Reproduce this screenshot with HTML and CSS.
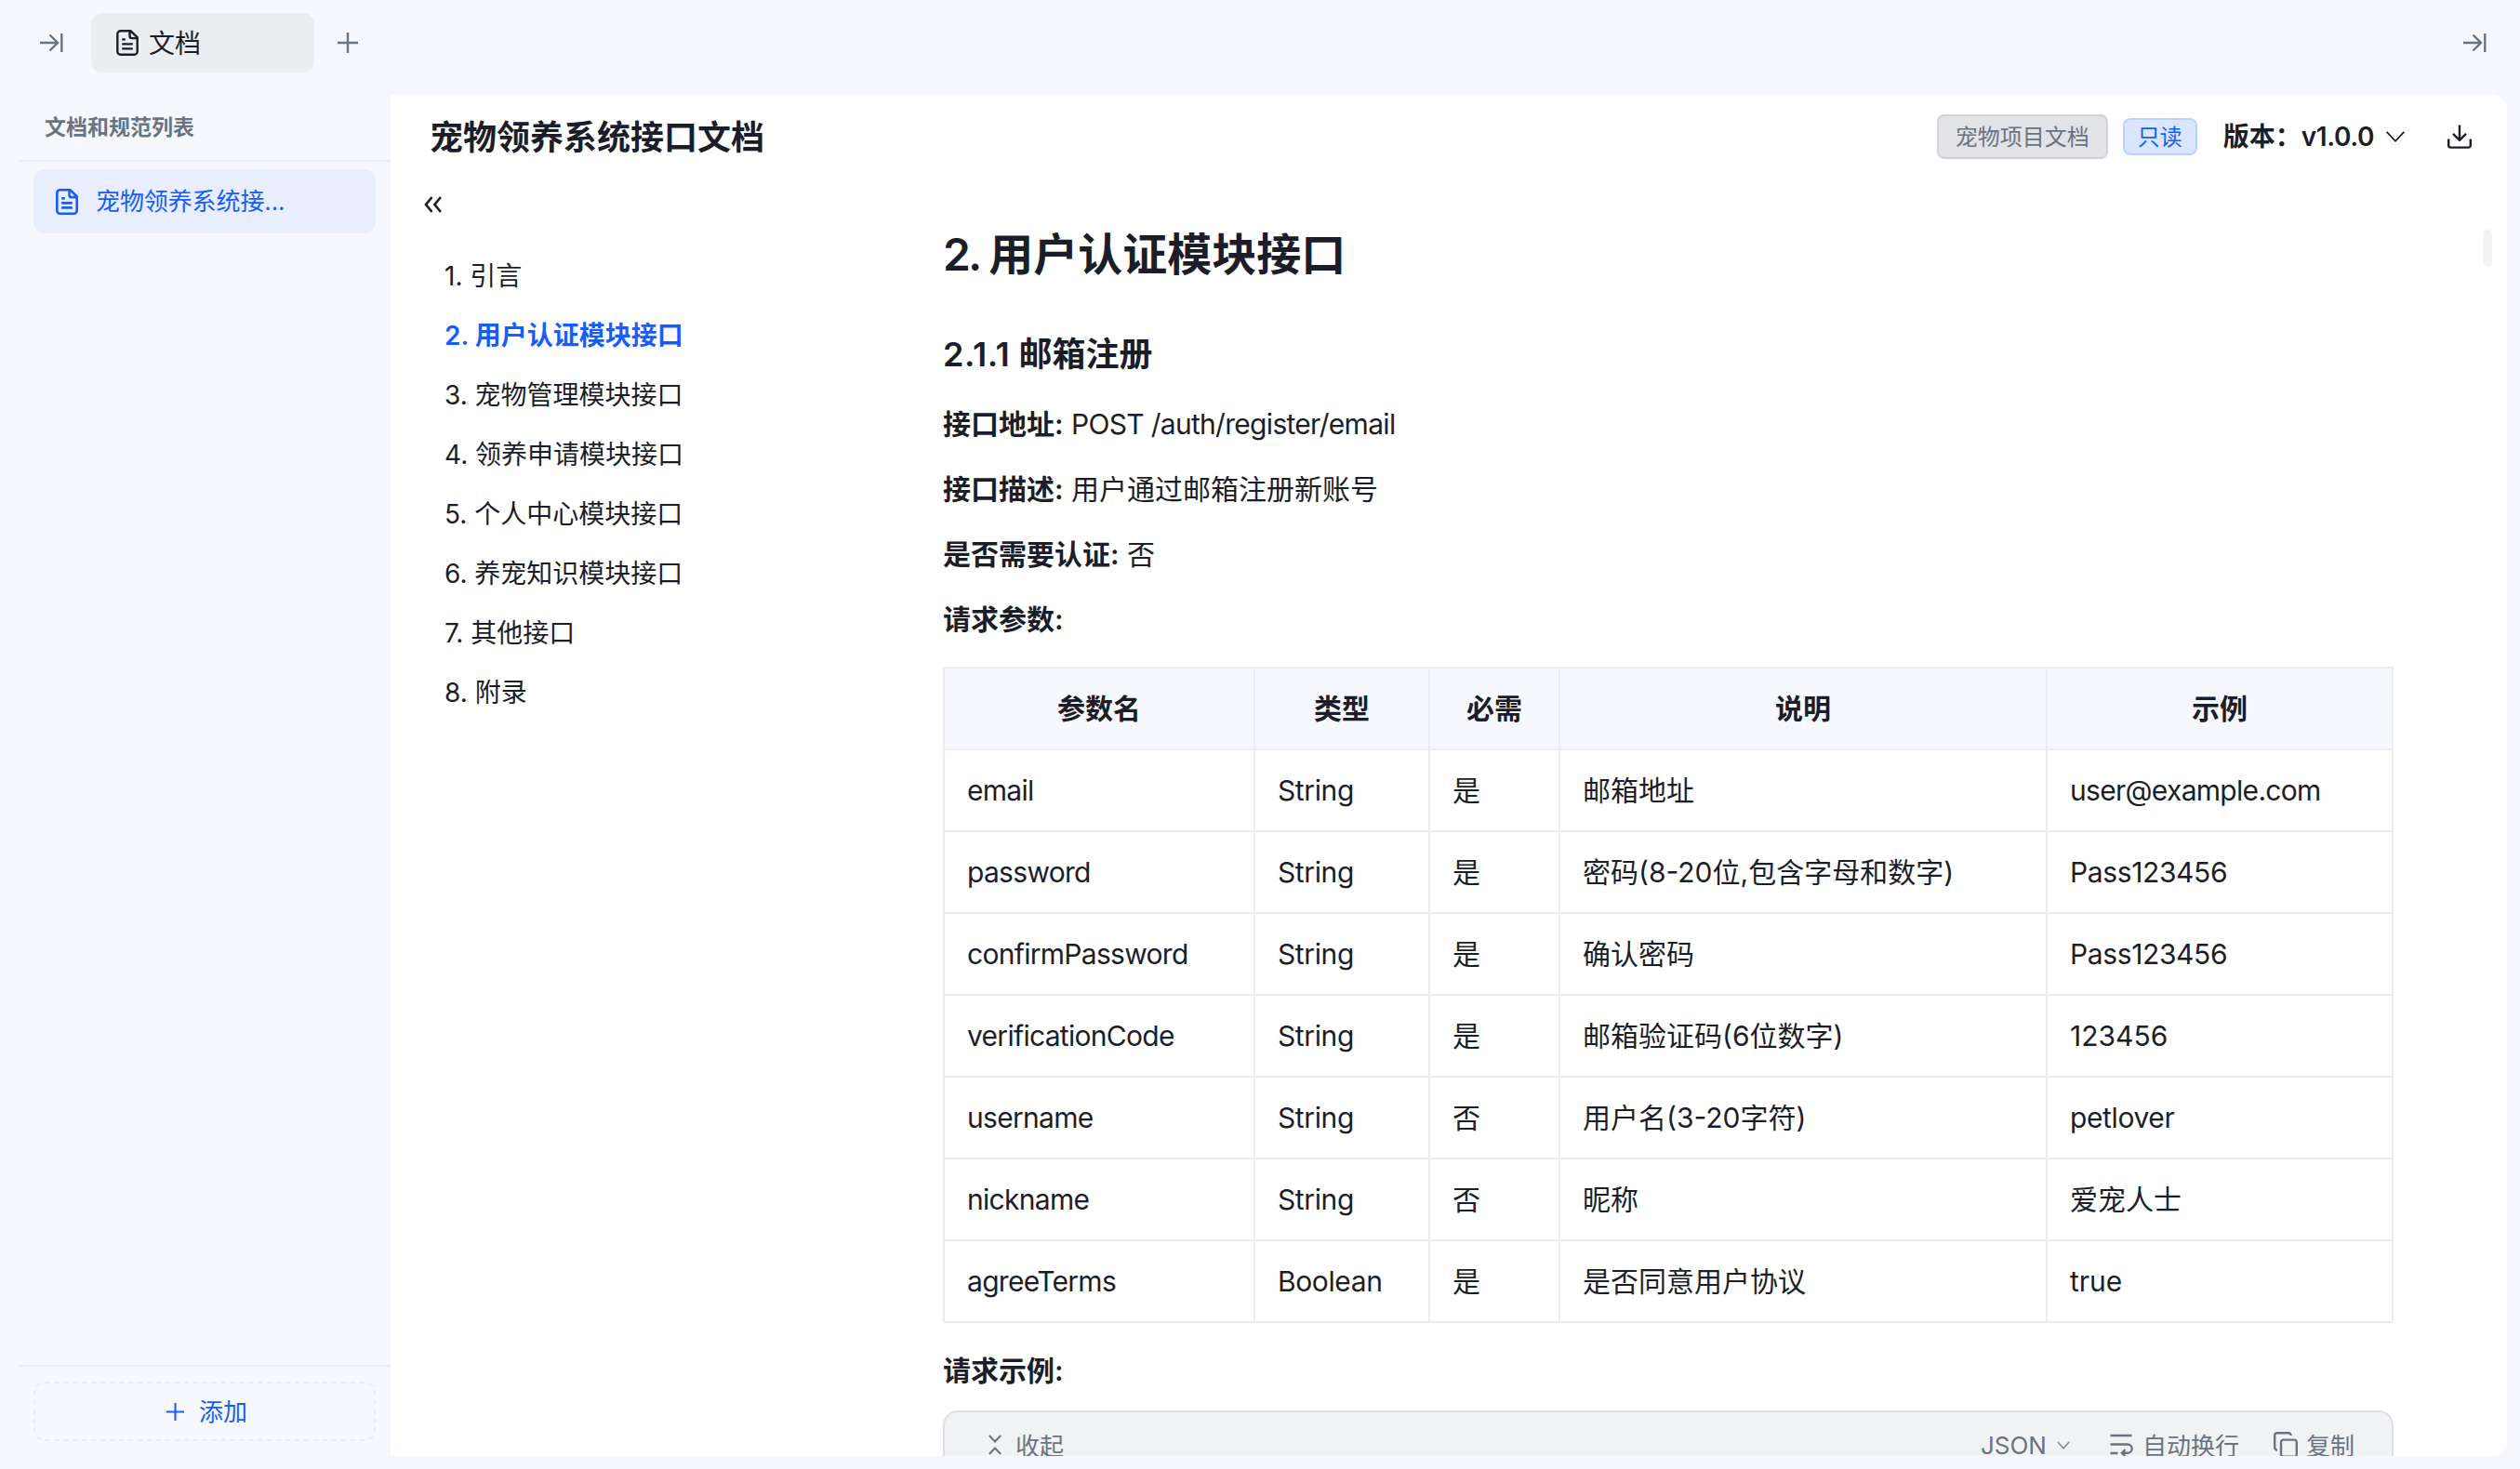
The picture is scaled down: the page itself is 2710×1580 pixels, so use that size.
FILE: index.html
```html
<!DOCTYPE html>
<html lang="zh-CN">
<head>
<meta charset="utf-8">
<title>宠物领养系统接口文档</title>
<link rel="stylesheet" href="styles.css">
</head>
<body>
<svg class="sprite" width="0" height="0" aria-hidden="true">
  <symbol id="doc" viewBox="0 0 24 28"><path d="M15.5 1.3H4.6A3.3 3.3 0 0 0 1.3 4.6v18.8a3.3 3.3 0 0 0 3.3 3.3h14.800a3.3 3.3 0 0 0 3.3-3.3V8.2zM14.5 1.6v5.2a2.3 2.3 0 0 0 2.3 2.3h5.7M6.2 10.4h3.6M6.2 15.4h11.6M6.2 20.4h11.6"/></symbol>
  <symbol id="to-right" viewBox="0 0 26 22"><path d="M1 11h18.5M11.5 2.5l8.5 8.5-8.5 8.5M24.3 1v20"/></symbol>
  <symbol id="plus" viewBox="0 0 22 22"><path d="M11 0v22M0 11h22"/></symbol>
</svg>
<div class="app">
  <header class="topbar">
    <svg class="icon arrow"><use href="#to-right"/></svg>
    <div class="tab"><svg class="icon doc"><use href="#doc"/></svg><span>文档</span></div>
    <svg class="icon plus"><use href="#plus"/></svg>
    <svg class="icon arrow end"><use href="#to-right"/></svg>
  </header>
  <div class="body">
    <aside class="sidebar">
      <h2 class="side-title">文档和规范列表</h2>
      <nav class="side-list">
        <a class="side-item"><svg class="icon doc"><use href="#doc"/></svg><span>宠物领养系统接...</span></a>
      </nav>
      <div class="side-foot">
        <button class="add"><svg class="icon"><use href="#plus"/></svg><span>添加</span></button>
      </div>
    </aside>
    <main class="panel">
      <div class="panel-head">
        <h1>宠物领养系统接口文档</h1>
        <span class="tag">宠物项目文档</span>
        <span class="tag readonly">只读</span>
        <span class="version">版本：<span>v1.0.0</span></span>
        <svg class="icon chevron" viewBox="0 0 20 12"><path d="M.7.8L10 10.8 19.3.8"/></svg>
        <svg class="icon download" viewBox="0 0 26 26"><path d="M13 .5v15.5M6 9.8l7 7 7-7M1.2 15.6v6.6a2.4 2.4 0 0 0 2.4 2.4h18.8a2.4 2.4 0 0 0 2.4-2.4v-6.6"/></svg>
      </div>
      <div class="panel-body">
        <nav class="toc">
          <svg class="icon fold" viewBox="0 0 20 18"><path d="M8.6 1L2 9l6.6 8M18 1l-6.600 8L18 17"/></svg>
          <ol>
            <li>1. 引言</li>
            <li class="active">2. 用户认证模块接口</li>
            <li>3. 宠物管理模块接口</li>
            <li>4. 领养申请模块接口</li>
            <li>5. 个人中心模块接口</li>
            <li>6. 养宠知识模块接口</li>
            <li>7. 其他接口</li>
            <li>8. 附录</li>
          </ol>
        </nav>
        <article class="article">
          <h2><span>2.</span> 用户认证模块接口</h2>
          <h3><span class="num">2.1.1</span> 邮箱注册</h3>
          <p><strong>接口地址:</strong> <span class="tight">POST /auth/register/email</span></p>
          <p><strong>接口描述:</strong> 用户通过邮箱注册新账号</p>
          <p><strong>是否需要认证:</strong> 否</p>
          <p><strong>请求参数:</strong></p>
          <table>
            <colgroup><col class="c-name"><col class="c-type"><col class="c-req"><col class="c-desc"><col></colgroup>
            <thead><tr><th>参数名</th><th>类型</th><th>必需</th><th>说明</th><th>示例</th></tr></thead>
            <tbody>
              <tr><td class="tight">email</td><td class="snug">String</td><td>是</td><td>邮箱地址</td><td class="tight">user@example.com</td></tr>
              <tr><td class="tight">password</td><td class="snug">String</td><td>是</td><td>密码(8-20位,包含字母和数字)</td><td class="snug">Pass123456</td></tr>
              <tr><td class="tight">confirmPassword</td><td class="snug">String</td><td>是</td><td>确认密码</td><td class="snug">Pass123456</td></tr>
              <tr><td class="tight">verificationCode</td><td class="snug">String</td><td>是</td><td>邮箱验证码(6位数字)</td><td>123456</td></tr>
              <tr><td class="tight">username</td><td class="snug">String</td><td>否</td><td>用户名(3-20字符)</td><td class="snug">petlover</td></tr>
              <tr><td class="tight">nickname</td><td class="snug">String</td><td>否</td><td>昵称</td><td>爱宠人士</td></tr>
              <tr><td class="tight">agreeTerms</td><td class="snug">Boolean</td><td>是</td><td>是否同意用户协议</td><td>true</td></tr>
            </tbody>
          </table>
          <p class="caption"><strong>请求示例:</strong></p>
          <div class="code">
            <svg class="icon collapse" viewBox="0 0 14 22"><path d="M.8 1L7 7.500 13.200 1M.8 21L7 14.500l6.200 6.500"/></svg>
            <span class="label">收起</span>
            <span class="lang">JSON</span>
            <svg class="icon caret" viewBox="0 0 14 9"><path d="M.7.7L7 7.800 13.300.7"/></svg>
            <svg class="icon wrap" viewBox="0 0 24 26"><path d="M.5 3h23M.5 12.500H19a4.600 4.600 0 0 1 0 9.300h-5M16.500 18l-3.500 3.800 3.500 3.800M.5 22h8"/></svg>
            <span class="wrap-label">自动换行</span>
            <svg class="icon copy" viewBox="0 0 26 28"><path d="M4 19.500A2.600 2.600 0 0 1 1.200 17V3.800A2.600 2.600 0 0 1 3.800 1.200H16A2.600 2.600 0 0 1 18.600 4M10.400 8.600h12a2.400 2.400 0 0 1 2.400 2.400v13.400a2.400 2.400 0 0 1-2.400 2.400h-12A2.400 2.400 0 0 1 8 24.400V11a2.400 2.400 0 0 1 2.400-2.400z"/></svg>
            <span>复制</span>
          </div>
        </article>
        <div class="scroll-thumb"></div>
      </div>
    </main>
  </div>
</div>
</body>
</html>
```

FILE: styles.css
```css
* { box-sizing: border-box; margin: 0; padding: 0; }
body {
  width: 2710px; height: 1580px; overflow: hidden;
  background: #f7f8fd; color: #1b1e28;
  font-family: Inter, "Noto Sans CJK SC", sans-serif;
  font-size: 30px;
}
.sprite { display: none; }
.icon { display: block; flex: none; fill: none; stroke: currentColor; stroke-width: 2.4; overflow: visible; }
.app { display: flex; flex-direction: column; width: 2710px; height: 1580px; padding: 0 14px 14px 20px; }

.topbar { display: flex; align-items: center; height: 102px; padding: 0 22px 10px; color: #6b7280; }
.topbar .arrow { width: 26px; height: 22px; }
.tab {
  display: flex; align-items: center; gap: 11px;
  width: 240px; height: 64px; margin: 0 25px 0 30px; padding-left: 27px;
  border-radius: 12px; background: #ecedf1; color: #1b1e28; font-size: 28px;
}
.tab span, .side-item span, .add span { padding-bottom: 3px; }
.doc { width: 24px; height: 28px; }
.topbar .plus { width: 22px; height: 22px; }
.topbar .end { margin-left: auto; }

.body { display: flex; flex: 1; min-height: 0; }
.sidebar { display: flex; flex-direction: column; width: 400px; }
.side-title {
  height: 72px; padding: 0 0 0 28px; border-bottom: 2px solid #ecedf1;
  font-size: 23px; font-weight: 600; line-height: 70px; color: #6b7280;
}
.side-list { flex: 1; padding: 8px 16px; }
.side-item {
  display: flex; align-items: center; gap: 19px; height: 69px; padding-left: 24px;
  border-radius: 12px; background: #e8eefd; color: #165dff; font-size: 26px;
}
.side-item span { padding-bottom: 4px; letter-spacing: -.1px; }
.side-item .doc { stroke-width: 2.600; }
.side-foot { padding: 16px; border-top: 2px solid #ecedf1; }
.add {
  display: flex; align-items: center; justify-content: center; gap: 16px;
  width: 368px; height: 64px; padding-left: 5px; border: 2px dashed #ecedf1; border-radius: 12px;
  background: none; color: #165dff; font: inherit; font-size: 26px;
}
.add .icon { width: 19px; height: 19px; }

.panel { display: flex; flex-direction: column; flex: 1; overflow: hidden; background: #fff; border-radius: 0 16px 16px 0; }
.panel-head { display: flex; align-items: center; height: 90px; padding: 0 38px 0 42px; }
.panel-head h1 { flex: 1; padding-top: 2px; font-size: 36px; font-weight: 600; line-height: 48px; }
.tag {
  display: flex; align-items: center; justify-content: center; width: 184px; height: 48px; padding-bottom: 3px;
  border: 2px solid #d1d3d8; border-radius: 8px; background: #e1e3e7; color: #6b7280; font-size: 24px;
}
.readonly { width: 80px; height: 40px; margin-left: 16px; border-color: #b9d3ff; background: #dae6ff; color: #165dff; }
.version { margin-left: 28px; font-size: 28px; font-weight: 600; line-height: 40px; }
.version span { letter-spacing: -.4px; }
.chevron { width: 20px; height: 12px; margin-left: 13px; stroke-width: 1.800; }
.download { width: 26px; height: 26px; margin-left: 46px; }

.panel-body { display: flex; flex: 1; min-height: 0; }
.toc { width: 594px; padding: 19px 0 0 36px; }
.fold { width: 20px; height: 18px; stroke-width: 2.600; }
.toc ol { list-style: none; padding: 36px 0 0 22px; font-size: 28px; line-height: 64px; }
.toc .active { color: #165dff; font-weight: 600; }

.article { width: 1560px; padding-top: 47px; }
.article h2 { font-size: 48px; font-weight: 600; line-height: 70px; word-spacing: -2px; }
.article h2 span { letter-spacing: -3px; }
.article h3 { margin: 46px 0 25px; font-size: 36px; font-weight: 600; line-height: 52px; }
.num { letter-spacing: .6px; }
.article p { height: 48px; margin-bottom: 22px; line-height: 48px; }
.article strong { font-weight: 600; }
.article .caption { margin-bottom: 19px; }
.article table { width: 1560px; margin: 27px 0; border-collapse: collapse; table-layout: fixed; }
.c-name { width: 334px; }
.c-type { width: 188px; }
.c-req { width: 140px; }
.c-desc { width: 524px; }
th, td { height: 88px; padding: 0 24px; border: 2px solid #ecedf1; text-align: left; line-height: 48px; }
th { background: #f7f8fd; font-weight: 600; text-align: center; }
.tight { letter-spacing: -.7px; }
.snug { letter-spacing: -.38px; }
.code {
  display: flex; align-items: center; height: 80px; padding: 0 40px 6px 47px;
  border: 2px solid #dddfe4; border-radius: 16px 16px 0 0; background: #f1f2f4; color: #6b7280; font-size: 26px;
}
.code span { padding-bottom: 1px; }
.code .lang { padding-bottom: 0; }
.collapse { width: 14px; height: 22px; margin-right: 15px; stroke-width: 2; }
.label { flex: 1; }
.caret { width: 14px; height: 9px; margin: 0 43px 0 11px; stroke-width: 1.600; color: #8a909c; }
.wrap { width: 24px; height: 26px; margin-right: 11px; }
.wrap-label { margin-right: 37px; }
.copy { width: 26px; height: 28px; margin-right: 9px; }
.scroll-thumb { width: 10px; height: 40px; margin: 55px 0 0 96px; border-radius: 5px; background: #f3f3f4; }
```
